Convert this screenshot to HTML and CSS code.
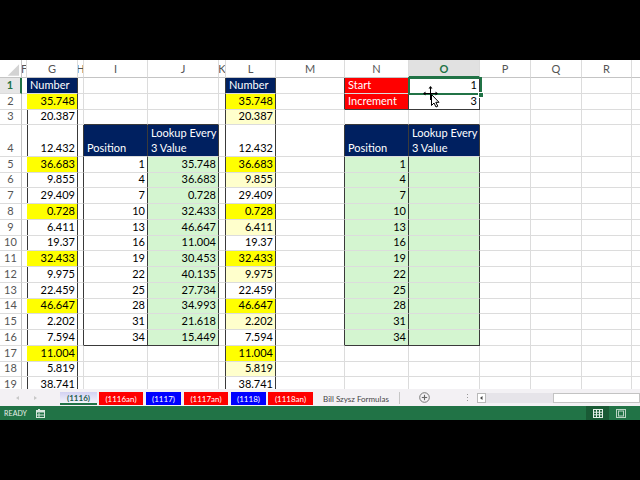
FILE: index.html
```html
<!DOCTYPE html>
<html>
<head>
<meta charset="utf-8">
<link rel="stylesheet" href="styles.css">
</head>
<body>
<div class="topbar"></div>
<div class="sheet">
  <!-- header row -->
  <div class="hd corner"><svg width="22" height="18" viewBox="0 0 22 18"><polygon points="8,16 20,16 20,4" fill="#d3d3d3"/></svg></div>
  <div class="hd">F</div><div class="hd">G</div><div class="hd">H</div><div class="hd">I</div><div class="hd">J</div><div class="hd">K</div><div class="hd">L</div><div class="hd">M</div><div class="hd">N</div><div class="hd hsel">O</div><div class="hd">P</div><div class="hd">Q</div><div class="hd">R</div><div class="hd last"></div>
  <!-- row 1 -->
  <div class="rh rsel">1</div><div class="c dr"></div><div class="c nv dr">Number</div><div class="c"></div><div class="c"></div><div class="c"></div><div class="c dr"></div><div class="c nv dr">Number</div><div class="c dr"></div><div class="c red dr">Start</div><div class="c r dr">1</div><div class="c"></div><div class="c"></div><div class="c"></div><div class="c last"></div>
  <!-- row 2 -->
  <div class="rh">2</div><div class="c dr"></div><div class="c y r dr">35.748</div><div class="c"></div><div class="c"></div><div class="c"></div><div class="c dr"></div><div class="c y r dr">35.748</div><div class="c dr"></div><div class="c red dr db">Increment</div><div class="c r dr db">3</div><div class="c"></div><div class="c"></div><div class="c"></div><div class="c last"></div>
  <!-- row 3 -->
  <div class="rh">3</div><div class="c dr"></div><div class="c r dr">20.387</div><div class="c"></div><div class="c db"></div><div class="c db"></div><div class="c dr"></div><div class="c ly r dr">20.387</div><div class="c"></div><div class="c db"></div><div class="c db"></div><div class="c"></div><div class="c"></div><div class="c"></div><div class="c last"></div>
  <!-- row 4 -->
  <div class="rh">4</div><div class="c dr"></div><div class="c r dr">12.432</div><div class="c dr"></div><div class="c nv dr">Position</div><div class="c nv dr two">Lookup Every<br>3 Value</div><div class="c dr"></div><div class="c r dr">12.432</div><div class="c dr"></div><div class="c nv dr">Position</div><div class="c nv dr two">Lookup Every<br>3 Value</div><div class="c"></div><div class="c"></div><div class="c"></div><div class="c last"></div>
  <!-- row 5 -->
  <div class="rh">5</div><div class="c dr"></div><div class="c y r dr">36.683</div><div class="c dr"></div><div class="c r dr">1</div><div class="c g r dr">35.748</div><div class="c dr"></div><div class="c y r dr">36.683</div><div class="c dr"></div><div class="c g r dr">1</div><div class="c g dr"></div><div class="c"></div><div class="c"></div><div class="c"></div><div class="c last"></div>
  <!-- row 6 -->
  <div class="rh">6</div><div class="c dr"></div><div class="c r dr">9.855</div><div class="c dr"></div><div class="c r dr">4</div><div class="c g r dr">36.683</div><div class="c dr"></div><div class="c ly r dr">9.855</div><div class="c dr"></div><div class="c g r dr">4</div><div class="c g dr"></div><div class="c"></div><div class="c"></div><div class="c"></div><div class="c last"></div>
  <!-- row 7 -->
  <div class="rh">7</div><div class="c dr"></div><div class="c r dr">29.409</div><div class="c dr"></div><div class="c r dr">7</div><div class="c g r dr">0.728</div><div class="c dr"></div><div class="c r dr">29.409</div><div class="c dr"></div><div class="c g r dr">7</div><div class="c g dr"></div><div class="c"></div><div class="c"></div><div class="c"></div><div class="c last"></div>
  <!-- row 8 -->
  <div class="rh">8</div><div class="c dr"></div><div class="c y r dr">0.728</div><div class="c dr"></div><div class="c r dr">10</div><div class="c g r dr">32.433</div><div class="c dr"></div><div class="c y r dr">0.728</div><div class="c dr"></div><div class="c g r dr">10</div><div class="c g dr"></div><div class="c"></div><div class="c"></div><div class="c"></div><div class="c last"></div>
  <!-- row 9 -->
  <div class="rh">9</div><div class="c dr"></div><div class="c r dr">6.411</div><div class="c dr"></div><div class="c r dr">13</div><div class="c g r dr">46.647</div><div class="c dr"></div><div class="c ly r dr">6.411</div><div class="c dr"></div><div class="c g r dr">13</div><div class="c g dr"></div><div class="c"></div><div class="c"></div><div class="c"></div><div class="c last"></div>
  <!-- row 10 -->
  <div class="rh">10</div><div class="c dr"></div><div class="c r dr">19.37</div><div class="c dr"></div><div class="c r dr">16</div><div class="c g r dr">11.004</div><div class="c dr"></div><div class="c r dr">19.37</div><div class="c dr"></div><div class="c g r dr">16</div><div class="c g dr"></div><div class="c"></div><div class="c"></div><div class="c"></div><div class="c last"></div>
  <!-- row 11 -->
  <div class="rh">11</div><div class="c dr"></div><div class="c y r dr">32.433</div><div class="c dr"></div><div class="c r dr">19</div><div class="c g r dr">30.453</div><div class="c dr"></div><div class="c y r dr">32.433</div><div class="c dr"></div><div class="c g r dr">19</div><div class="c g dr"></div><div class="c"></div><div class="c"></div><div class="c"></div><div class="c last"></div>
  <!-- row 12 -->
  <div class="rh">12</div><div class="c dr"></div><div class="c r dr">9.975</div><div class="c dr"></div><div class="c r dr">22</div><div class="c g r dr">40.135</div><div class="c dr"></div><div class="c ly r dr">9.975</div><div class="c dr"></div><div class="c g r dr">22</div><div class="c g dr"></div><div class="c"></div><div class="c"></div><div class="c"></div><div class="c last"></div>
  <!-- row 13 -->
  <div class="rh">13</div><div class="c dr"></div><div class="c r dr">22.459</div><div class="c dr"></div><div class="c r dr">25</div><div class="c g r dr">27.734</div><div class="c dr"></div><div class="c r dr">22.459</div><div class="c dr"></div><div class="c g r dr">25</div><div class="c g dr"></div><div class="c"></div><div class="c"></div><div class="c"></div><div class="c last"></div>
  <!-- row 14 -->
  <div class="rh">14</div><div class="c dr"></div><div class="c y r dr">46.647</div><div class="c dr"></div><div class="c r dr">28</div><div class="c g r dr">34.993</div><div class="c dr"></div><div class="c y r dr">46.647</div><div class="c dr"></div><div class="c g r dr">28</div><div class="c g dr"></div><div class="c"></div><div class="c"></div><div class="c"></div><div class="c last"></div>
  <!-- row 15 -->
  <div class="rh">15</div><div class="c dr"></div><div class="c r dr">2.202</div><div class="c dr"></div><div class="c r dr">31</div><div class="c g r dr">21.618</div><div class="c dr"></div><div class="c ly r dr">2.202</div><div class="c dr"></div><div class="c g r dr">31</div><div class="c g dr"></div><div class="c"></div><div class="c"></div><div class="c"></div><div class="c last"></div>
  <!-- row 16 -->
  <div class="rh">16</div><div class="c dr"></div><div class="c r dr">7.594</div><div class="c dr"></div><div class="c r dr db">34</div><div class="c g r dr db">15.449</div><div class="c dr"></div><div class="c r dr">7.594</div><div class="c dr"></div><div class="c g r dr db">34</div><div class="c g dr db"></div><div class="c"></div><div class="c"></div><div class="c"></div><div class="c last"></div>
  <!-- row 17 -->
  <div class="rh">17</div><div class="c dr"></div><div class="c y r dr">11.004</div><div class="c"></div><div class="c"></div><div class="c"></div><div class="c dr"></div><div class="c y r dr">11.004</div><div class="c"></div><div class="c"></div><div class="c"></div><div class="c"></div><div class="c"></div><div class="c"></div><div class="c last"></div>
  <!-- row 18 -->
  <div class="rh">18</div><div class="c dr"></div><div class="c r dr">5.819</div><div class="c"></div><div class="c"></div><div class="c"></div><div class="c dr"></div><div class="c ly r dr">5.819</div><div class="c"></div><div class="c"></div><div class="c"></div><div class="c"></div><div class="c"></div><div class="c"></div><div class="c last"></div>
  <!-- row 19 -->
  <div class="rh">19</div><div class="c dr"></div><div class="c r dr">38.741</div><div class="c"></div><div class="c"></div><div class="c"></div><div class="c dr"></div><div class="c r dr">38.741</div><div class="c"></div><div class="c"></div><div class="c"></div><div class="c"></div><div class="c"></div><div class="c"></div><div class="c last"></div>

  <!-- selection overlay on O1 -->
  <div class="selbox"></div>
  <div class="handle"></div>
  <svg class="cursor" width="20" height="22" viewBox="0 0 20 22">
    <g stroke="#000" stroke-width="1" fill="none">
      <line x1="7.5" y1="1" x2="7.5" y2="14"/>
      <line x1="1" y1="7.5" x2="14" y2="7.5"/>
    </g>
    <g fill="#000">
      <polygon points="7.5,0 5.5,2.5 9.5,2.5"/>
      <polygon points="0,7.5 2.5,5.5 2.5,9.5"/>
      <polygon points="15,7.5 12.5,5.5 12.5,9.5"/>
    </g>
    <polygon points="8.5,8.5 8.5,19.5 11,17 13,21 14.8,20.2 12.8,16.3 16,16.3" fill="#fff" stroke="#000" stroke-width="1" stroke-linejoin="round"/>
  </svg>
</div>

<div class="tabbar">
  <div class="navs">
    <svg width="60" height="17" viewBox="0 0 60 17"><polygon points="19,7 16,9 19,11" fill="#c8c8c8"/><polygon points="34,7 37,9 34,11" fill="#c8c8c8"/></svg>
  </div>
  <div class="tab active">(1116)</div>
  <div class="tab red w44 g2">(1116an)</div>
  <div class="tab blue w35 g3">(1117)</div>
  <div class="tab red w44 g3">(1117an)</div>
  <div class="tab blue w35 g3">(1118)</div>
  <div class="tab red w45 g2">(1118an)</div>
  <div class="tab plain">Bill Szysz Formulas</div>
  <div class="tabsep"></div>
  <div class="addbtn"><svg width="11" height="11" viewBox="0 0 11 11"><circle cx="5.5" cy="5.5" r="4.8" fill="none" stroke="#777" stroke-width="1"/><line x1="5.5" y1="2.8" x2="5.5" y2="8.2" stroke="#666" stroke-width="1.1"/><line x1="2.8" y1="5.5" x2="8.2" y2="5.5" stroke="#666" stroke-width="1.1"/></svg></div>
  <div class="dots"><span></span><span></span><span></span></div>
  <div class="hscroll">
    <div class="sbtn"><svg width="7" height="8" viewBox="0 0 7 8"><polygon points="4.5,2 2,4 4.5,6" fill="#444"/></svg></div>
    <div class="strack"></div>
    <div class="sthumb"></div>
  </div>
</div>

<div class="status">
  <span class="ready">READY</span>
  <svg class="macro" width="9" height="9" viewBox="0 0 9 9"><rect x="0.5" y="1.5" width="8" height="7" fill="none" stroke="#d9e8df" stroke-width="1"/><rect x="0.5" y="1.5" width="8" height="2" fill="#d9e8df"/><rect x="2" y="0" width="2" height="2" fill="#d9e8df"/><line x1="3" y1="4" x2="3" y2="8" stroke="#d9e8df"/><line x1="1" y1="6" x2="8" y2="6" stroke="#d9e8df"/></svg>
  <div class="views">
    <div class="view on"><svg width="10" height="9" viewBox="0 0 10 9"><g stroke="#e4efe8" stroke-width="1" fill="none"><rect x="0.5" y="0.5" width="9" height="8"/><line x1="3.5" y1="0" x2="3.5" y2="9"/><line x1="6.5" y1="0" x2="6.5" y2="9"/><line x1="0" y1="3.2" x2="10" y2="3.2"/><line x1="0" y1="5.8" x2="10" y2="5.8"/></g></svg></div>
    <div class="view"><svg width="10" height="9" viewBox="0 0 10 9"><g stroke="#b9d3c3" stroke-width="1" fill="none"><rect x="0.5" y="0.5" width="9" height="8"/><rect x="2.5" y="2" width="5" height="5"/></g></svg></div>
  </div>
</div>
</body>
</html>
```

FILE: styles.css
```css
* { box-sizing: border-box; margin: 0; padding: 0; }

body {
  width: 640px;
  height: 480px;
  overflow: hidden;
  background: #000;
  font-family: Lato, "Liberation Sans", sans-serif;
}

.topbar { height: 60px; background: #000; }

.sheet {
  position: relative;
  height: 329px;
  overflow: hidden;
  background: #fff;
  display: grid;
  grid-template-columns: 22px 5px 51px 6px 64px 71px 7px 50px 69px 64px 71px 51px 51px 50px 8px;
  grid-template-rows: 18px repeat(3, 15.75px) 31.5px repeat(15, 15.75px);
  font-size: 11px;
  color: #000;
}

.c {
  display: flex;
  align-items: flex-end;
  padding: 0 2px 1px 3px;
  line-height: 14px;
  white-space: nowrap;
  overflow: hidden;
  border-right: 1px solid #dcdcdc;
  border-bottom: 1px solid #dcdcdc;
}

.c.last { border-right: none; }
.r { justify-content: flex-end; }
.dr { border-right-color: #3a3a3a; }
.db { border-bottom-color: #3a3a3a; }

.nv { background: #002060; color: #fff; }
.two { line-height: 15px; padding-right: 0; }
.y { background: #ffff00; }
.ly { background: #ffffcc; }
.g { background: #d4f5d0; }
.red { background: #ff0000; color: #fff; }

.hd {
  display: flex;
  align-items: center;
  justify-content: center;
  overflow: hidden;
  white-space: nowrap;
  color: #555;
  font-size: 11px;
  border-right: 1px solid #dcdcdc;
  border-bottom: 1px solid #c4c4c4;
}
.hd.last { border-right: none; }
.corner { border-right-color: #c4c4c4; }
.corner svg { display: block; }
.hsel {
  background: #e1e1e1;
  color: #217346;
  font-weight: bold;
  border-bottom: 2px solid #217346;
}

.rh {
  display: flex;
  align-items: flex-end;
  justify-content: center;
  padding-bottom: 1px;
  line-height: 14px;
  color: #555;
  font-size: 11px;
  border-right: 1px solid #c4c4c4;
  border-bottom: 1px solid #dcdcdc;
}
.rsel {
  background: #e6e6e6;
  color: #217346;
  font-weight: bold;
  border-right: 2px solid #217346;
}

.selbox {
  position: absolute;
  left: 408px;
  top: 17px;
  width: 74px;
  height: 18px;
  border: 2px solid #217346;
}
.handle {
  position: absolute;
  left: 478px;
  top: 32px;
  width: 6px;
  height: 6px;
  background: #217346;
  border: 1px solid #fff;
}
.cursor {
  position: absolute;
  left: 423px;
  top: 26px;
}

/* sheet tabs */
.tabbar {
  height: 17px;
  background: #f3f1f4;
  display: flex;
  align-items: flex-start;
  font-size: 8px;
}
.navs { width: 60px; height: 17px; }
.navs svg { display: block; }

.tab {
  height: 13px;
  margin-top: 3px;
  display: flex;
  align-items: center;
  justify-content: center;
  color: #fff;
  white-space: nowrap;
}
.tab.active {
  width: 37px;
  background: linear-gradient(#d2d1f2, #f4f4fb);
  color: #1d5c4c;
  font-weight: bold;
  border-bottom: 2px solid #217346;
}
.tab.red { background: #ff0000; }
.tab.blue { background: #0000ff; }
.w44 { width: 44px; }
.w45 { width: 45px; }
.w35 { width: 35px; }
.g2 { margin-left: 2px; }
.g3 { margin-left: 3px; }
.tab.plain { width: 86px; color: #444; }

.tabsep {
  width: 1px;
  height: 12px;
  margin-top: 3px;
  background: #c6c6c6;
}
.addbtn { margin-left: 19px; margin-top: 3px; width: 11px; height: 11px; }
.addbtn svg { display: block; }

.dots {
  margin-left: 37px;
  margin-top: 5px;
  width: 1px;
  display: flex;
  flex-direction: column;
  gap: 2px;
}
.dots span { width: 1px; height: 1px; background: #999; }

.hscroll {
  margin-left: 9px;
  margin-top: 4px;
  height: 10px;
  flex: 1;
  display: flex;
}
.sbtn {
  width: 9px;
  height: 10px;
  background: #fff;
  border: 1px solid #b9b9b9;
  display: flex;
  align-items: center;
  justify-content: center;
}
.sbtn svg { display: block; }
.strack { width: 67px; background: #e6e4e9; }
.sthumb { flex: 1; background: #fff; border: 1px solid #c3c3c3; }

/* status bar */
.status {
  height: 14px;
  background: #217346;
  display: flex;
  align-items: center;
  font-size: 7px;
  color: #e9f1ec;
}
.ready { margin-left: 4px; width: 22px; letter-spacing: 0.1px; }
.macro { margin-left: 10px; display: block; }
.views { margin-left: auto; display: flex; height: 14px; margin-right: 8px; }
.view {
  width: 23px;
  height: 14px;
  display: flex;
  align-items: center;
  justify-content: center;
}
.view.on { background: #195a35; }
.view svg { display: block; }
```
